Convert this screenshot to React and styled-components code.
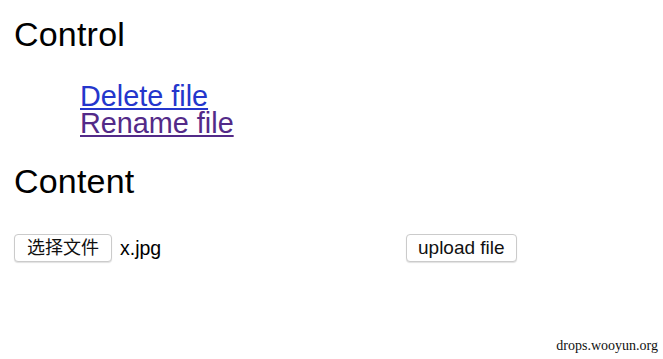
import styled, { createGlobalStyle } from 'styled-components'

const GlobalStyle = createGlobalStyle`
    html, body {
        margin: 0;
        padding: 0;
        background: #fff;
    }
    body {
        font-family: "Liberation Sans", Arial, sans-serif;
        color: #000;
    }
`;

const Page = styled.div`
    position: relative;
    width: 663px;
    height: 359px;
    padding: 17px 0 0 14px;
    box-sizing: border-box;
    display: flex;
    flex-direction: column;
`;

const Heading = styled.h2`
    margin: 0 0 ${p => p.$gap}px 0;
    font-size: 34px;
    line-height: 34px;
    font-weight: normal;
    letter-spacing: 0.2px;
`;

const LinkList = styled.div`
    display: flex;
    flex-direction: column;
    align-items: flex-start;
    padding-left: 66px;
    margin: 0 0 27px 0;
`;

const Link = styled.a`
    font-size: 28.8px;
    line-height: 27px;
    color: ${p => (p.$visited ? '#532a88' : '#2436cc')};
    text-decoration: underline;
    text-underline-offset: 2px;
    text-decoration-thickness: 2px;
`;

const UploadRow = styled.div`
    display: flex;
    align-items: center;
`;

const FilePicker = styled.div`
    width: 392px;
    display: flex;
    align-items: center;
    gap: 8px;
`;

const Button = styled.button`
    height: 28px;
    padding: 0 ${p => p.$pad}px;
    background: #fff;
    border: 1px solid #cbcbcb;
    border-radius: 4px;
    box-shadow: 0 1px 1px rgba(0, 0, 0, 0.12);
    font-family: "Liberation Sans", "Noto Sans CJK SC", Arial, sans-serif;
    font-size: ${p => p.$size}px;
    line-height: 26px;
    color: #111;
    cursor: pointer;
`;

const FileName = styled.span`
    font-size: 19.5px;
    color: #000;
`;

const Watermark = styled.span`
    position: absolute;
    right: 5px;
    bottom: 5px;
    font-family: "Liberation Serif", "Times New Roman", serif;
    font-size: 14px;
    color: #111;
`;

export default function App() {
    return (
        <>
            <GlobalStyle />
            <Page>
                <Heading $gap={32}>Control</Heading>
                <LinkList>
                    <Link href="#">Delete file</Link>
                    <Link href="#" $visited>Rename file</Link>
                </LinkList>
                <Heading $gap={36}>Content</Heading>
                <UploadRow>
                    <FilePicker>
                        <Button $pad={12} $size={18}>选择文件</Button>
                        <FileName>x.jpg</FileName>
                    </FilePicker>
                    <Button $pad={11} $size={19}>upload file</Button>
                </UploadRow>
                <Watermark>drops.wooyun.org</Watermark>
            </Page>
        </>
    );
}
